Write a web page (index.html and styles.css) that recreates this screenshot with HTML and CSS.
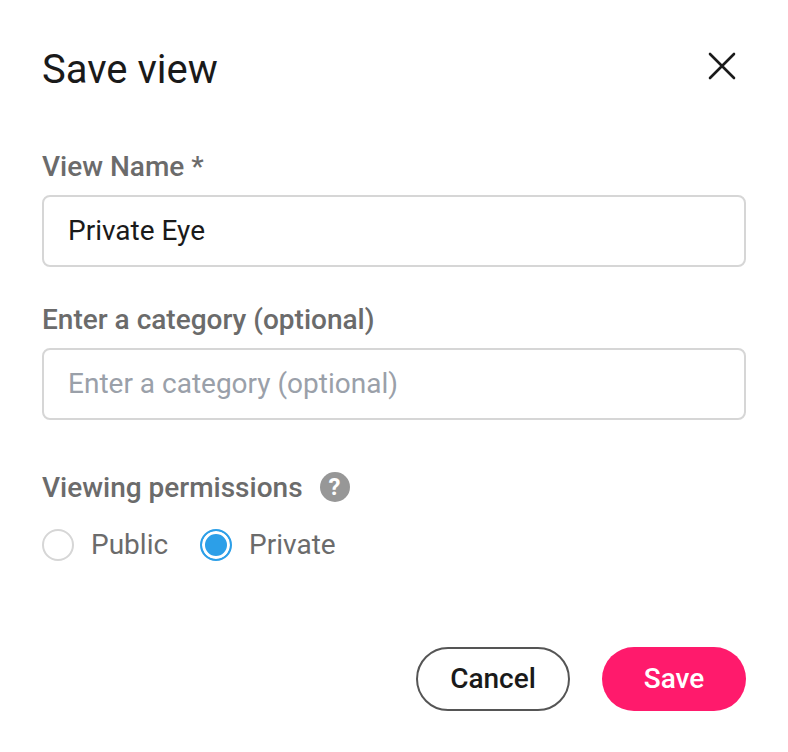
FILE: index.html
```html
<!DOCTYPE html>
<html lang="en">
<head>
    <meta charset="UTF-8">
    <meta name="viewport" content="width=device-width, initial-scale=1.0">
    <title>Save view</title>
    <link rel="stylesheet" href="styles.css">
</head>
<body>
    <div class="modal">
        <div class="modal-header">
            <h2>Save view</h2>
            <button class="close" aria-label="Close">
                <svg width="28" height="28" viewBox="0 0 28 28">
                    <path d="M2 2 L26 26 M26 2 L2 26" fill="none" stroke="#1a1a1a" stroke-width="2.6" stroke-linecap="round"/>
                </svg>
            </button>
        </div>
        <div class="field">
            <label for="view-name">View Name *</label>
            <input id="view-name" type="text" value="Private Eye">
        </div>
        <div class="field">
            <label for="category">Enter a category (optional)</label>
            <input id="category" type="text" placeholder="Enter a category (optional)">
        </div>
        <div class="permissions">
            <div class="permissions-title">
                <span>Viewing permissions</span>
                <span class="help">?</span>
            </div>
            <div class="radios">
                <div class="radio-option">
                    <span class="radio"></span>
                    <span>Public</span>
                </div>
                <div class="radio-option">
                    <span class="radio checked"></span>
                    <span>Private</span>
                </div>
            </div>
        </div>
        <div class="actions">
            <button class="btn btn-cancel">Cancel</button>
            <button class="btn btn-save">Save</button>
        </div>
    </div>
</body>
</html>
```

FILE: styles.css
```css
* {
    box-sizing: border-box;
}
body {
    margin: 0;
    background: #fff;
    font-family: Roboto, "Liberation Sans", sans-serif;
    color: #6b6b6b;
}
.modal {
    padding: 42px 42px 0;
}
.modal-header {
    display: flex;
    justify-content: space-between;
    align-items: flex-start;
    height: 111px;
}
.modal-header h2 {
    margin: 0;
    font-size: 40px;
    line-height: 56px;
    font-weight: 400;
    color: #1a1a1a;
}
.close {
    padding: 0;
    margin: 10px 10px 0 0;
    border: none;
    background: none;
    line-height: 0;
}
.field {
    margin-bottom: 39px;
}
.field label {
    display: block;
    height: 42px;
    font-size: 28px;
    line-height: 28px;
    font-weight: 500;
    color: #6b6b6b;
}
.field input {
    display: block;
    width: 100%;
    height: 72px;
    padding: 0 24px 2px;
    border: 2px solid #d6d6d6;
    border-radius: 8px;
    font-family: inherit;
    font-size: 28px;
    color: #1a1a1a;
}
.field input::placeholder {
    color: #9aa0a9;
    opacity: 1;
}
.permissions {
    margin-top: 51px;
}
.permissions-title {
    display: flex;
    align-items: center;
    gap: 17px;
    height: 32px;
    font-size: 28px;
    font-weight: 500;
}
.help {
    display: flex;
    justify-content: center;
    align-items: center;
    width: 30px;
    height: 30px;
    border-radius: 50%;
    background: #979797;
    color: #fff;
    font-size: 24px;
    font-weight: 700;
}
.radios {
    display: flex;
    gap: 32px;
    margin-top: 25px;
}
.radio-option {
    display: flex;
    align-items: center;
    gap: 17px;
    font-size: 28px;
}
.radio {
    width: 32px;
    height: 32px;
    border: 2px solid #d6d6d6;
    border-radius: 50%;
}
.radio.checked {
    border-color: #2c9fe8;
    background: #2c9fe8;
    box-shadow: inset 0 0 0 3px #fff;
}
.actions {
    display: flex;
    justify-content: flex-end;
    gap: 32px;
    margin-top: 86px;
}
.btn {
    height: 64px;
    padding: 0 0 2px;
    border-radius: 32px;
    font-family: inherit;
    font-size: 28px;
    font-weight: 500;
}
.btn-cancel {
    width: 154px;
    border: 2px solid #555;
    background: #fff;
    color: #1a1a1a;
}
.btn-save {
    width: 144px;
    border: none;
    background: #ff1a6c;
    color: #fff;
}
```
